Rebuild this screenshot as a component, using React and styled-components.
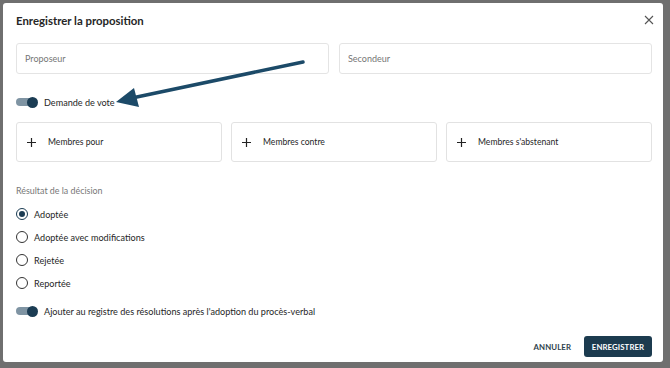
import React from 'react';
import styled, { createGlobalStyle } from 'styled-components';

const GlobalStyle = createGlobalStyle`
  html, body {
    margin: 0;
    padding: 0;
    background: #6f6f6f;
  }
  body {
    font-family: 'Lato', 'Liberation Sans', sans-serif;
    color: #2b2b2b;
  }
`;

// fond gris derrière la modale
const Backdrop = styled.div`
  width: 670px;
  height: 368px;
  box-sizing: border-box;
  padding: 3px 7px 6px 3px;
  background: #6f6f6f;
`;

const Dialog = styled.div`
  position: relative;
  width: 660px;
  height: 359px;
  box-sizing: border-box;
  background: #fff;
  border-radius: 3px;
  padding: 0 11px 5px 13px;
  display: flex;
  flex-direction: column;
`;

const Header = styled.div`
  height: 40px;
  box-sizing: border-box;
  padding-top: 11px;
  display: flex;
  align-items: flex-start;
  justify-content: space-between;
`;

const Title = styled.h2`
  margin: 0;
  font-size: 11.4px;
  line-height: 14px;
  font-weight: 700;
  color: #262626;
`;

const CloseButton = styled.button`
  border: none;
  background: none;
  padding: 0;
  width: 14px;
  height: 14px;
  margin-right: -4px;
  margin-top: -1px;
  cursor: pointer;
  display: flex;
  align-items: center;
  justify-content: center;
`;

const InputRow = styled.div`
  display: grid;
  grid-template-columns: 1fr 1fr;
  gap: 10px;
`;

const Input = styled.input`
  height: 31px;
  box-sizing: border-box;
  border: 1px solid #e4e4e4;
  border-radius: 3px;
  padding: 0 8px;
  font-family: inherit;
  font-size: 9px;
  color: #333;
  outline: none;
  &::placeholder {
    color: #767676;
  }
`;

const ToggleRow = styled.label`
  display: flex;
  align-items: center;
  gap: 6px;
  height: 20px;
  margin-top: ${p => p.$top}px;
  font-size: 9.1px;
  color: #262626;
`;

const Track = styled.span`
  position: relative;
  width: 20px;
  height: 8px;
  border-radius: 4px;
  background: #7f94a3;
  margin-right: 2px;
`;

const Thumb = styled.span`
  position: absolute;
  right: -2px;
  top: -1.5px;
  width: 11px;
  height: 11px;
  border-radius: 50%;
  background: #1b3c53;
`;

const MemberRow = styled.div`
  display: grid;
  grid-template-columns: repeat(3, 1fr);
  gap: 9px;
  margin-top: 10px;
`;

const MemberBox = styled.button`
  height: 40px;
  box-sizing: border-box;
  border: 1px solid #e2e2e2;
  border-radius: 3px;
  background: #fff;
  display: flex;
  align-items: center;
  gap: 12px;
  padding: 0 0 0 10px;
  font-family: inherit;
  font-size: 8.6px;
  color: #262626;
  cursor: pointer;
`;

const SectionLabel = styled.div`
  margin-top: 22px;
  font-size: 8.9px;
  color: #777;
  height: 14px;
  line-height: 14px;
`;

const RadioList = styled.div`
  display: flex;
  flex-direction: column;
  gap: 9px;
  margin-top: 9px;
`;

const RadioRow = styled.label`
  display: flex;
  align-items: center;
  gap: 6px;
  height: 14px;
  font-size: 9.1px;
  color: #262626;
`;

const RadioCircle = styled.span`
  width: 12px;
  height: 12px;
  box-sizing: border-box;
  border-radius: 50%;
  border: 1.2px solid ${p => (p.$checked ? '#1b3c53' : '#333')};
  display: flex;
  align-items: center;
  justify-content: center;
  &::after {
    content: '';
    display: ${p => (p.$checked ? 'block' : 'none')};
    width: 6px;
    height: 6px;
    border-radius: 50%;
    background: #1b3c53;
  }
`;

const Footer = styled.div`
  margin-top: auto;
  display: flex;
  justify-content: flex-end;
  align-items: center;
  gap: 13px;
`;

const TextButton = styled.button`
  border: none;
  background: none;
  font-family: inherit;
  font-size: 7.8px;
  font-weight: 700;
  letter-spacing: 0.1px;
  color: #2e3f4c;
  padding: 0;
  cursor: pointer;
`;

const PrimaryButton = styled.button`
  height: 21px;
  width: 68px;
  border: none;
  border-radius: 3px;
  background: #1c3b4f;
  color: #fff;
  font-family: inherit;
  font-size: 7.8px;
  font-weight: 700;
  letter-spacing: 0.1px;
  cursor: pointer;
`;

// flèche d'annotation posée par-dessus la modale
const Arrow = styled.svg`
  position: absolute;
  left: -3px;
  top: -3px;
  pointer-events: none;
`;

const PlusIcon = () => (
  <svg width="9" height="9" viewBox="0 0 9 9">
    <path d="M4.5 0v9M0 4.5h9" stroke="#222" strokeWidth="1.2" fill="none" />
  </svg>
);

const results = ['Adoptée', 'Adoptée avec modifications', 'Rejetée', 'Reportée'];

const Toggle = () => (
  <Track>
    <Thumb />
  </Track>
);

export default function App() {
  return (
    <>
      <GlobalStyle />
      <Backdrop>
        <Dialog>
          <Header>
            <Title>Enregistrer la proposition</Title>
            <CloseButton aria-label="Fermer">
              <svg width="10" height="10" viewBox="0 0 10 10">
                <path d="M1 1l8 8M9 1l-8 8" stroke="#555" strokeWidth="1.1" fill="none" />
              </svg>
            </CloseButton>
          </Header>

          <InputRow>
            <Input placeholder="Proposeur" />
            <Input placeholder="Secondeur" />
          </InputRow>

          <ToggleRow $top={18}>
            <Toggle />
            Demande de vote
          </ToggleRow>

          <MemberRow>
            <MemberBox><PlusIcon />Membres pour</MemberBox>
            <MemberBox><PlusIcon />Membres contre</MemberBox>
            <MemberBox><PlusIcon />Membres s'abstenant</MemberBox>
          </MemberRow>

          <SectionLabel>Résultat de la décision</SectionLabel>
          <RadioList>
            {results.map((r, i) => (
              <RadioRow key={r}>
                <RadioCircle $checked={i === 0} />
                {r}
              </RadioRow>
            ))}
          </RadioList>

          <ToggleRow $top={11}>
            <Toggle />
            Ajouter au registre des résolutions après l'adoption du procès-verbal
          </ToggleRow>

          <Footer>
            <TextButton>ANNULER</TextButton>
            <PrimaryButton>ENREGISTRER</PrimaryButton>
          </Footer>

          <Arrow width="670" height="368" viewBox="0 0 670 368">
            <path d="M303 62 L132 98" stroke="#1c4a68" strokeWidth="3.5" strokeLinecap="round" fill="none" />
            <path d="M116 102 L134 88 L139 107 Z" fill="#1c4a68" />
          </Arrow>
        </Dialog>
      </Backdrop>
    </>
  );
}
